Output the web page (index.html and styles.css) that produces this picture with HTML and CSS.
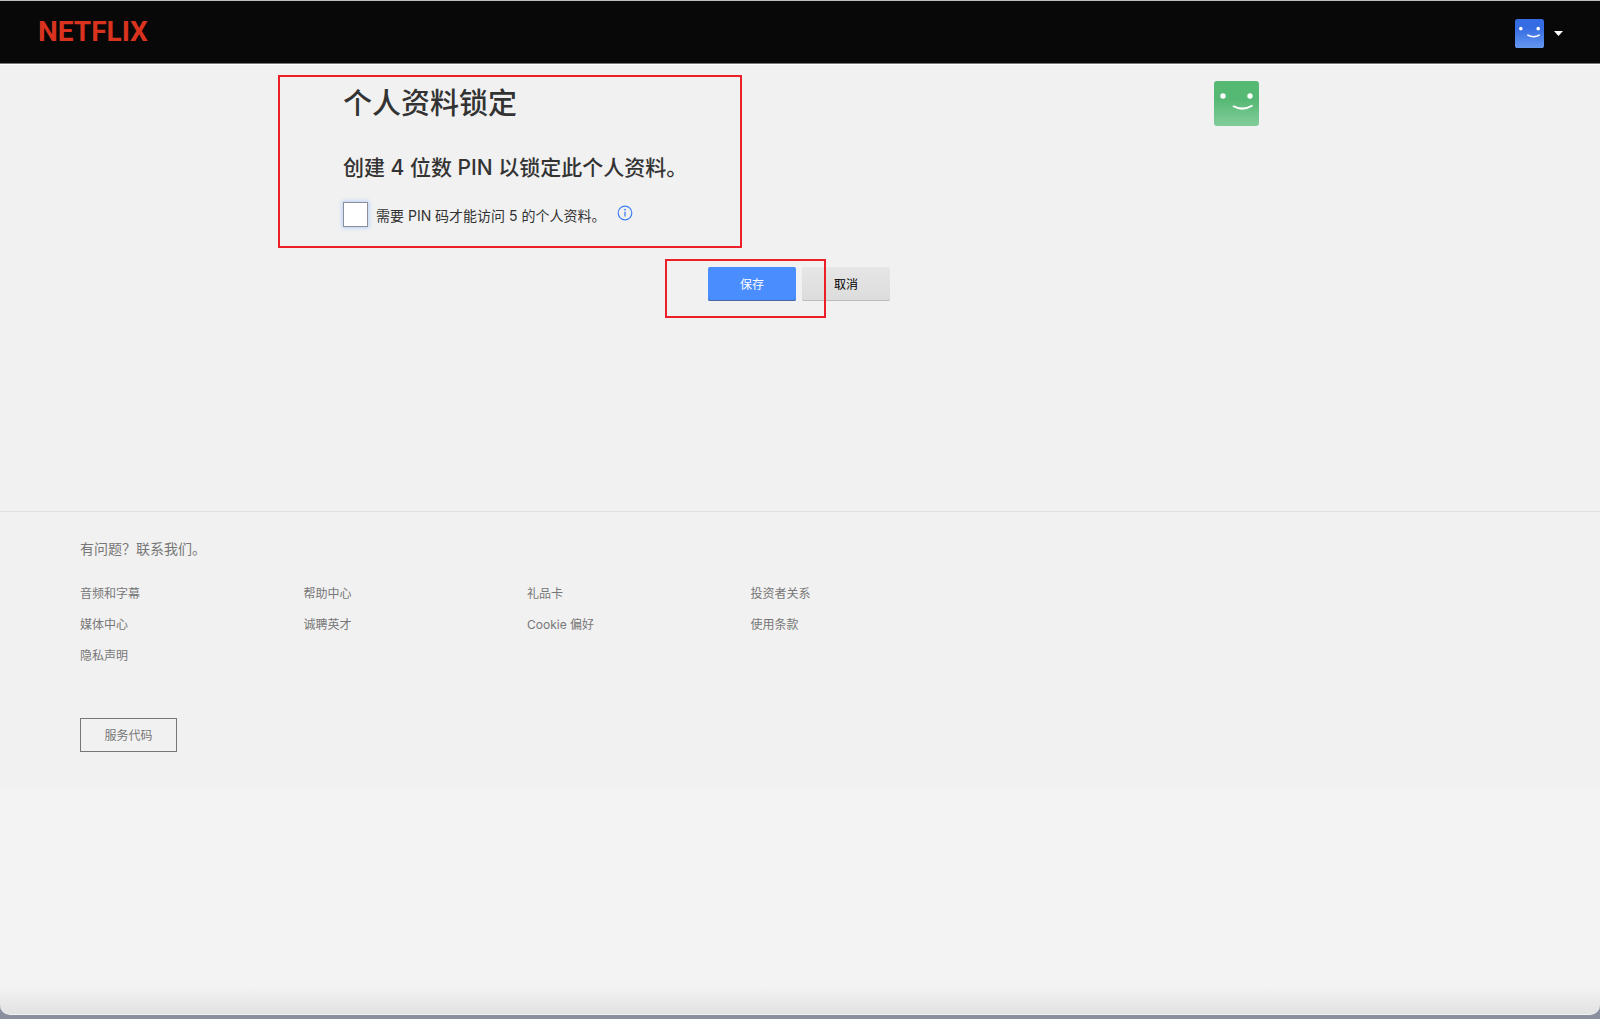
FILE: index.html
```html
<!DOCTYPE html>
<html lang="zh-CN">
<head>
<meta charset="utf-8">
<meta name="viewport" content="width=device-width, initial-scale=1">
<title>个人资料锁定 - Netflix</title>
<link rel="stylesheet" href="styles.css">
</head>
<body>
<div class="window">
  <header class="topbar">
    <a class="brand" href="#">NETFLIX</a>
    <button class="account" type="button" aria-label="帐户菜单">
      <svg class="account-avatar" viewBox="0 0 45 45" aria-hidden="true">
        <defs><linearGradient id="blue" x1="0" y1="0" x2="0" y2="1"><stop offset="0.3" stop-color="#356be3"/><stop offset="1" stop-color="#6497ef"/></linearGradient></defs>
        <rect width="45" height="45" rx="4" fill="url(#blue)"/>
        <circle cx="9" cy="15" r="2.8" fill="#fff"/><circle cx="36" cy="15" r="2.8" fill="#fff"/>
        <path d="M19 24.5Q29 30.500 38.500 24.500" fill="none" stroke="#fff" stroke-width="2.300"/>
      </svg>
      <svg class="caret" viewBox="0 0 9 5" aria-hidden="true"><path d="M0 0H9L4.500 5Z" fill="#fff"/></svg>
    </button>
  </header>

  <main class="page">
    <div class="content">
      <div class="title-row">
        <h1>个人资料锁定</h1>
        <svg class="profile-avatar" viewBox="0 0 45 45" role="img" aria-label="个人资料头像">
          <defs><linearGradient id="green" x1="0" y1="0" x2="0" y2="1"><stop offset="0.4" stop-color="#55b873"/><stop offset="1" stop-color="#82cd9b"/></linearGradient></defs>
          <rect width="45" height="45" rx="3" fill="url(#green)"/>
          <circle cx="9" cy="15" r="2.700" fill="#fff"/><circle cx="36" cy="15" r="2.700" fill="#fff"/>
          <path d="M19 25Q28.500 30.500 38.500 24.500" fill="none" stroke="#fff" stroke-width="2"/>
        </svg>
      </div>
      <h2>创建 4 位数 PIN 以锁定此个人资料。</h2>
      <div class="pin-row">
        <input class="pin-box" type="checkbox" id="require-pin">
        <label for="require-pin">需要 PIN 码才能访问 5 的个人资料。</label>
        <button class="info" type="button" aria-label="更多信息">
          <svg viewBox="0 0 16 16" aria-hidden="true"><circle cx="8" cy="8" r="6.800" fill="none" stroke="#3f7ff5" stroke-width="1.200"/><path d="M8 6.700V11.500" stroke="#3f7ff5" stroke-width="1.300"/><circle cx="8" cy="4.700" r="0.900" fill="#3f7ff5"/></svg>
        </button>
      </div>
      <div class="actions">
        <button class="btn btn-save" type="button">保存</button>
        <button class="btn btn-cancel" type="button">取消</button>
      </div>
      <div class="mark mark-form"></div>
      <div class="mark mark-save"></div>
    </div>
  </main>

  <footer class="footer">
    <p class="contact"><a href="#">有问题？联系我们。</a></p>
    <ul class="links">
      <li><a href="#">音频和字幕</a></li>
      <li><a href="#">帮助中心</a></li>
      <li><a href="#">礼品卡</a></li>
      <li><a href="#">投资者关系</a></li>
      <li><a href="#">媒体中心</a></li>
      <li><a href="#">诚聘英才</a></li>
      <li><a href="#">Cookie 偏好</a></li>
      <li><a href="#">使用条款</a></li>
      <li><a href="#">隐私声明</a></li>
    </ul>
    <button class="service" type="button">服务代码</button>
  </footer>
</div>
</body>
</html>
```

FILE: styles.css
```css
* {
  box-sizing: border-box;
}

body {
  margin: 0;
  padding-bottom: 4px;
  min-height: 100vh;
  display: flex;
  flex-direction: column;
  background: #8b909e;
  color: #333;
  font-family: Inter, "Noto Sans CJK SC", sans-serif;
  font-size: 14px;
}

button {
  font: inherit;
  cursor: pointer;
}

a {
  color: inherit;
  text-decoration: none;
}

.window {
  flex: 1;
  overflow: hidden;
  border-radius: 0 0 10px 10px;
  border-bottom: 1px solid #f3f3f3;
  background: linear-gradient(to top, #e2e2e2, #f3f3f3 28px);
}

.topbar {
  display: flex;
  align-items: center;
  justify-content: space-between;
  height: 64px;
  padding: 0 37px 0 38px;
  border-top: 1px solid #b9bfbd;
  border-bottom: 1px solid #777;
  background: #080808;
}

.brand {
  color: #d9321f;
  font-family: Roboto, "Liberation Sans", sans-serif;
  font-size: 28px;
  font-weight: 700;
  line-height: 60px;
}

.account {
  display: flex;
  align-items: center;
  gap: 10px;
  padding: 3px 0 0;
  border: 0;
  background: none;
}

.account-avatar {
  width: 29px;
  height: 29px;
}

.caret {
  width: 9px;
  height: 5px;
}

.page {
  border-top: 1px solid #fff;
  background: #f1f1f1;
}

.content {
  position: relative;
  max-width: 918px;
  min-height: 446px;
  margin: 0 auto;
  padding: 16px 0 0 2px;
}

.title-row {
  display: flex;
  justify-content: space-between;
}

h1 {
  margin: 0;
  font-size: 29px;
  font-weight: 500;
  line-height: 46px;
}

.profile-avatar {
  width: 45px;
  height: 45px;
}

h2 {
  margin: 25px 0 18px;
  font-size: 21px;
  font-weight: 500;
  line-height: 32px;
}

.pin-row {
  display: flex;
  align-items: center;
  gap: 8px;
}

.pin-box {
  appearance: none;
  width: 25px;
  height: 25px;
  margin: 0;
  border: 1px solid #8c8f98;
  background: #fff;
  box-shadow: 0 0 4px 1px #b8d2fb;
}

.pin-box:checked {
  background: #4a8dff;
}

.info {
  align-self: flex-start;
  padding: 3px;
  border: 0;
  background: none;
}

.info svg {
  display: block;
  width: 16px;
  height: 16px;
}

.actions {
  display: flex;
  justify-content: center;
  gap: 6px;
  margin-top: 40px;
  padding-right: 4px;
}

.btn {
  width: 88px;
  height: 34px;
  padding: 0 0 2px;
  border: 0;
  border-radius: 2px;
  font-size: 12px;
}

.btn-save {
  background: #4a8dff;
  box-shadow: inset 0 -1px #4a66a0;
  color: #fff;
}

.btn-cancel {
  background: linear-gradient(#e6e6e6, #dcdcdc);
  box-shadow: inset 0 -1px #bbb;
  color: #000;
}

.mark {
  position: absolute;
  border: 2px solid #ec2029;
  pointer-events: none;
}

.mark-form {
  top: 10px;
  left: -63px;
  width: 464px;
  height: 173px;
}

.mark-save {
  top: 194px;
  left: 324px;
  width: 161px;
  height: 59px;
}

.footer {
  padding: 26px 80px 35px;
  border-top: 1px solid #e0e0e0;
  background: #f1f1f1;
  color: #777;
}

.contact {
  margin: 0 0 26px;
  line-height: 22px;
}

.links {
  display: grid;
  grid-template-columns: repeat(4, 1fr);
  gap: 15px 0;
  max-width: 894px;
  margin: 0;
  padding: 0;
  list-style: none;
  font-size: 12px;
  line-height: 16px;
}

.service {
  width: 97px;
  height: 34px;
  margin-top: 54px;
  padding: 0 0 2px;
  border: 1px solid #777;
  background: none;
  color: #777;
  font-size: 12px;
}
```
